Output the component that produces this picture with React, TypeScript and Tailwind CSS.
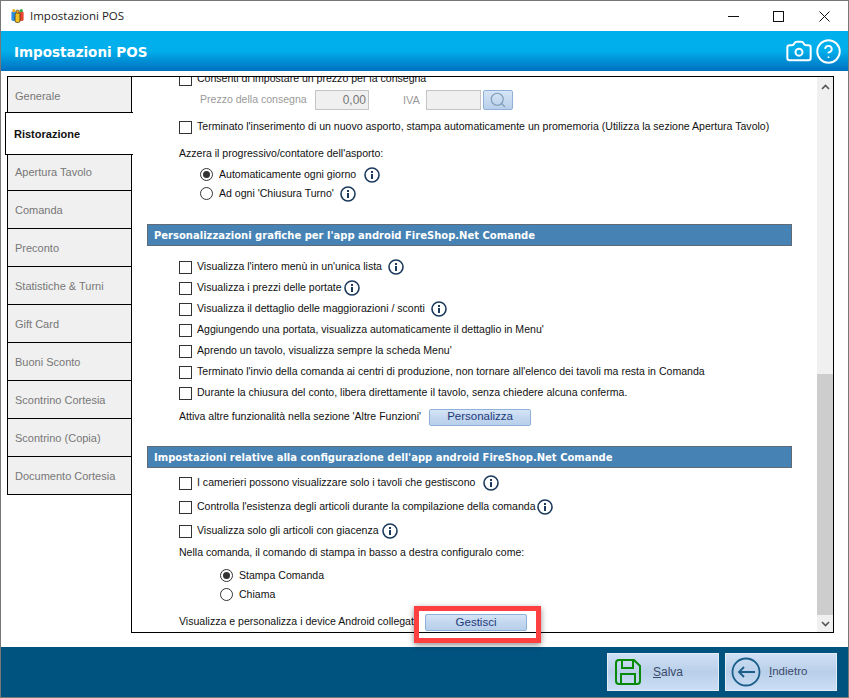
import { Camera, CircleHelp, Search } from "lucide-react"

const tabs = [
  "Generale",
  "Ristorazione",
  "Apertura Tavolo",
  "Comanda",
  "Preconto",
  "Statistiche & Turni",
  "Gift Card",
  "Buoni Sconto",
  "Scontrino Cortesia",
  "Scontrino (Copia)",
  "Documento Cortesia",
]

function tabClass(t: string) {
  if (t === "Generale") return "h-[37px] pt-[4px]"
  if (t === "Apertura Tavolo") return "h-[37px]"
  return "h-[39px] pt-[2px]"
}

function Info() {
  return (
    <svg width="18" height="18" viewBox="0 0 18 18" className="shrink-0">
      <circle cx="9" cy="9" r="7" fill="none" stroke="#1b3a5c" strokeWidth="1.6" />
      <rect x="8" y="8" width="2" height="5" fill="#1b3a5c" />
      <rect x="8" y="5" width="2" height="2" fill="#1b3a5c" />
    </svg>
  )
}

function Check({ label, info, gap = "ml-[7px]" }: { label: string; info?: boolean; gap?: string }) {
  return (
    <div className="flex items-center h-[20px]">
      <span className="w-[13px] h-[13px] border border-[#333] bg-white shrink-0" />
      <span className="ml-[5px] whitespace-nowrap">{label}</span>
      {info && <span className={gap}><Info /></span>}
    </div>
  )
}

function Radio({ label, on, info, gap = "ml-[7px]" }: { label: string; on?: boolean; info?: boolean; gap?: string }) {
  return (
    <div className="flex items-center h-[19px]">
      <span className="w-[13px] h-[13px] rounded-full border border-[#333] bg-white shrink-0 flex items-center justify-center">
        {on && <span className="w-[7px] h-[7px] rounded-full bg-[#333]" />}
      </span>
      <span className="ml-[6px] whitespace-nowrap">{label}</span>
      {info && <span className={gap}><Info /></span>}
    </div>
  )
}

function Section({ title }: { title: string }) {
  return (
    <div className="h-[22px] w-[645px] -ml-[32px] bg-[#4682b4] border border-[#5f6b76] flex items-center pl-[6px] text-white font-bold text-[10px] font-['DejaVu_Sans','Liberation_Sans',sans-serif] whitespace-nowrap">
      {title}
    </div>
  )
}

function SmallButton({ label }: { label: string }) {
  return (
    <div className="w-[102px] h-[17px] rounded-[2px] border border-[#8fb0d8] bg-gradient-to-b from-[#d6e5f6] via-[#c3d7ef] to-[#b9cfea] flex items-center justify-center text-[#1f3a7a] text-[11.5px]">
      {label}
    </div>
  )
}

export default function App() {
  return (
    <div className="relative w-[849px] h-[698px] bg-white border border-[#777] flex flex-col overflow-hidden text-[11px] text-[#111] font-['Liberation_Sans',Arial,sans-serif]">
      <div className="h-[30px] flex items-center shrink-0 pl-[10px] bg-white">
        <svg width="13" height="16" viewBox="0 0 16 18">
          <rect x="0.5" y="3" width="5.5" height="12" rx="2" fill="#2f8fe0" />
          <rect x="10" y="3" width="5.5" height="12" rx="2" fill="#e8452c" />
          <rect x="5" y="5" width="6" height="12" rx="2" fill="#f2c01d" stroke="#222" strokeWidth="0.8" />
          <circle cx="3.5" cy="2.5" r="2" fill="#f2b01d" />
          <circle cx="12.5" cy="2.5" r="2" fill="#2fae4a" />
          <circle cx="8" cy="3.5" r="2" fill="#e8a01d" stroke="#222" strokeWidth="0.6" />
        </svg>
        <span className="ml-[6px] text-[11.5px] text-[#222] font-['Open_Sans',sans-serif]">Impostazioni POS</span>
        <div className="ml-auto flex items-center pr-[1px]">
          <div className="w-[46px] flex justify-center">
            <svg width="11" height="11" viewBox="0 0 11 11"><path d="M0 5.5 H11" stroke="#111" strokeWidth="1" /></svg>
          </div>
          <div className="w-[45px] flex justify-center">
            <svg width="11" height="11" viewBox="0 0 11 11"><rect x="0.5" y="0.5" width="10" height="10" fill="none" stroke="#111" strokeWidth="1" /></svg>
          </div>
          <div className="w-[46px] flex justify-center">
            <svg width="11" height="11" viewBox="0 0 11 11"><path d="M0.5 0.5 L10.5 10.5 M10.5 0.5 L0.5 10.5" stroke="#111" strokeWidth="1" /></svg>
          </div>
        </div>
      </div>

      <div className="h-[40px] shrink-0 flex items-center pl-[13px] pr-[6px] bg-gradient-to-b from-[#00b0ee] via-[#00aeea] to-[#0070c0]">
        <span className="mt-[2px] text-white font-bold text-[13.5px] font-['DejaVu_Sans',sans-serif]">Impostazioni POS</span>
        <div className="ml-auto flex items-center gap-[2px] text-white">
          <Camera size={28} strokeWidth={1.7} />
          <CircleHelp size={27} strokeWidth={1.7} />
        </div>
      </div>

      <div className="flex-1 flex min-h-0 pt-[5px] pb-[14px] pl-[6px] pr-[14px] bg-white">
        <div className="w-[125px] shrink-0 relative z-10">
          {tabs.map((t) =>
            t === "Ristorazione" ? (
              <div key={t} className="h-[43px] pt-[2px] -ml-[2px] -mr-[1px] -mb-[1px] bg-white border border-black border-r-0 flex items-center pl-[8px] font-bold text-[#111] relative">
                {t}
              </div>
            ) : (
              <div key={t} className={`${tabClass(t)} -mb-[1px] last:mb-0 bg-[#f0f0f0] border border-black flex items-center pl-[7px] text-[#777]`}>
                {t}
              </div>
            )
          )}
        </div>

        <div className="flex-1 min-w-0 -ml-[1px] border border-black flex overflow-hidden">
          <div className="flex-1 min-w-0 pl-[47px] overflow-hidden text-[10.55px]">
            <div className="-mt-[8px]">
              <Check label="Consenti di impostare un prezzo per la consegna" />
              <div className="flex items-center h-[20px] mt-[1px] pl-[21px] text-[#9a9a9a]">
                <span className="w-[115px]">Prezzo della consegna</span>
                <div className="w-[54px] h-[20px] bg-[#f0f0f0] border border-[#c4c4c4] flex items-center justify-end pr-[2px] text-[#777] text-[12px]">0,00</div>
                <span className="ml-[34px] text-[#9a9a9a] text-[11px]">IVA</span>
                <div className="ml-[6px] w-[55px] h-[20px] bg-[#f0f0f0] border border-[#c4c4c4]" />
                <div className="w-[30px] h-[20px] ml-[2px] rounded-[2px] border border-[#8fb0d8] bg-gradient-to-b from-[#d6e5f6] to-[#b9cfea] flex items-center justify-center text-[#7f9cb8]"><Search size={18} strokeWidth={1.5} /></div>
              </div>
              <div className="mt-[7px]"><Check label="Terminato l'inserimento di un nuovo asporto, stampa automaticamente un promemoria (Utilizza la sezione Apertura Tavolo)" /></div>
              <div className="mt-[7px] h-[20px] flex items-center">Azzera il progressivo/contatore dell'asporto:</div>
              <div className="pl-[21px] mt-[1px]">
                <Radio label="Automaticamente ogni giorno" on info />
                <Radio label="Ad ogni 'Chiusura Turno'" info gap="ml-[5px]" />
              </div>
              <div className="mt-[21px]"><Section title="Personalizzazioni grafiche per l'app android FireShop.Net Comande" /></div>
              <div className="mt-[11px] flex flex-col gap-[1px]">
                <Check label="Visualizza l'intero menù in un'unica lista" info gap="ml-[5px]" />
                <Check label="Visualizza i prezzi delle portate" info gap="ml-[1px]" />
                <Check label="Visualizza il dettaglio delle maggiorazioni / sconti" info gap="ml-[5px]" />
                <Check label="Aggiungendo una portata, visualizza automaticamente il dettaglio in Menu'" />
                <Check label="Aprendo un tavolo, visualizza sempre la scheda Menu'" />
                <Check label="Terminato l'invio della comanda ai centri di produzione, non tornare all'elenco dei tavoli ma resta in Comanda" />
                <Check label="Durante la chiusura del conto, libera direttamente il tavolo, senza chiedere alcuna conferma." />
              </div>
              <div className="mt-[4px] h-[20px] flex items-center">
                <span>Attiva altre funzionalità nella sezione 'Altre Funzioni'</span>
                <span className="ml-[8px]"><SmallButton label="Personalizza" /></span>
              </div>
              <div className="mt-[19px]"><Section title="Impostazioni relative alla configurazione dell'app android FireShop.Net Comande" /></div>
              <div className="mt-[5px] flex flex-col gap-[4px]">
                <Check label="I camerieri possono visualizzare solo i tavoli che gestiscono" info />
                <Check label="Controlla l'esistenza degli articoli durante la compilazione della comanda" info gap="ml-0" />
                <Check label="Visualizza solo gli articoli con giacenza" info gap="ml-[2px]" />
              </div>
              <div className="mt-[2px] h-[20px] flex items-center">Nella comanda, il comando di stampa in basso a destra configuralo come:</div>
              <div className="pl-[41px] mt-[3px]">
                <Radio label="Stampa Comanda" on />
                <Radio label="Chiama" />
              </div>
              <div className="mt-[8px] h-[20px] flex items-center">
                <span className="w-[246px] whitespace-nowrap">Visualizza e personalizza i device Android collegati</span>
                <span className="mt-[1px]"><SmallButton label="Gestisci" /></span>
              </div>
            </div>
          </div>
          <div className="w-[16px] shrink-0 bg-[#f0f0f0] flex flex-col">
            <div className="h-[17px] mt-[1px] flex items-center justify-center">
              <svg width="9" height="6" viewBox="0 0 9 6"><path d="M1 5 L4.5 1.5 L8 5" fill="none" stroke="#555" strokeWidth="1.6" /></svg>
            </div>
            <div className="flex-1 flex flex-col justify-end">
              <div className="h-[241px] bg-[#cdcdcd]" />
            </div>
            <div className="h-[17px] flex items-center justify-center">
              <svg width="9" height="6" viewBox="0 0 9 6"><path d="M1 1 L4.5 4.5 L8 1" fill="none" stroke="#555" strokeWidth="1.6" /></svg>
            </div>
          </div>
        </div>
      </div>

      <div className="h-[50px] shrink-0 bg-[#00527f] flex items-center justify-end gap-[6px] pr-[11px] pb-[1px]">
        <div className="w-[112px] h-[38px] border border-[#e3edf8] bg-gradient-to-b from-[#cfe0f5] via-[#b9cfe9] to-[#cbdef5] flex items-center pl-[6px]">
          <svg width="28" height="28" viewBox="0 0 28 28" fill="none" stroke="#078a07" strokeWidth="2">
            <path d="M5 2 H20 L26 8 V23 Q26 26 23 26 H5 Q2 26 2 23 V5 Q2 2 5 2 Z" />
            <path d="M8 2 V10 H19 V2" />
            <path d="M7 26 V16 H21 V26" />
          </svg>
          <span className="ml-[11px] text-[12px] text-[#3a4a6a]"><span className="underline">S</span>alva</span>
        </div>
        <div className="w-[112px] h-[38px] border border-[#e3edf8] bg-gradient-to-b from-[#cfe0f5] via-[#b9cfe9] to-[#cbdef5] flex items-center pl-[5px]">
          <svg width="30" height="30" viewBox="0 0 30 30" fill="none" stroke="#1a5f8a" strokeWidth="1.8">
            <circle cx="15" cy="15" r="13.5" />
            <path d="M24 15 H8 M13 10 L8 15 L13 20" />
          </svg>
          <span className="ml-[8px] text-[11.5px] text-[#3a4a6a]"><span className="underline">I</span>ndietro</span>
        </div>
      </div>

      <div className="absolute left-[413px] top-[605px] w-[127px] h-[37px] border-[5px] border-[#ff4040] shadow-[0_2px_6px_rgba(0,0,0,0.45)]" />
    </div>
  )
}
